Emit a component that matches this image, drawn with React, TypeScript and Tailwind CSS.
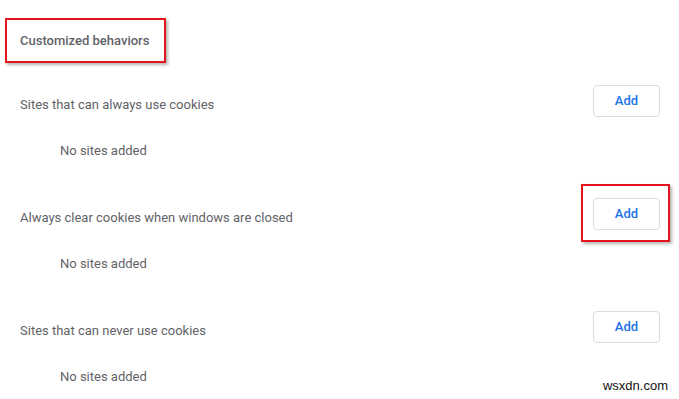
const rows = [
    { label: 'Sites that can always use cookies', marked: false },
    { label: 'Always clear cookies when windows are closed', marked: true },
    { label: 'Sites that can never use cookies', marked: false },
];

const App = () => {
    return (
        <div className="relative h-[399px] w-[679px] overflow-hidden bg-white pt-[18px] font-['Roboto',sans-serif]">
            <div className="ml-[5px] flex h-[45px] w-[161px] items-center border-2 border-[#e3141b] pl-[13px] shadow-[2px_2px_3px_rgba(0,0,0,0.3)]">
                <h2 className="text-[13px] font-medium text-[#5f6368]">Customized behaviors</h2>
            </div>

            <div className="pl-5 pr-[19px]">
                {rows.map((row, i) => (
                    <div key={row.label} className={i === 0 ? 'mt-[22px]' : 'mt-[37px]'}>
                        <div className="flex h-[32px] items-center justify-between">
                            <span className="mt-2 text-[13px] text-[#5f6368]">{row.label}</span>
                            <button className="relative h-[32px] w-[67px] rounded-[4px] border border-[#dadce0] bg-white text-[13px] font-medium text-[#1a73e8]">
                                Add
                                {row.marked && (
                                    <span className="pointer-events-none absolute -left-[13px] -right-[11px] -top-[15px] -bottom-[13px] border-2 border-[#e3141b] shadow-[2px_2px_3px_rgba(0,0,0,0.3)]" />
                                )}
                            </button>
                        </div>
                        <p className="mt-[24px] pl-10 text-[13px] leading-5 text-[#5f6368]">No sites added</p>
                    </div>
                ))}
            </div>

            <span className="absolute right-[11px] top-[376px] font-['Liberation_Sans',sans-serif] text-[13px] text-[#111]">wsxdn.com</span>
        </div>
    );
};

export default App;
